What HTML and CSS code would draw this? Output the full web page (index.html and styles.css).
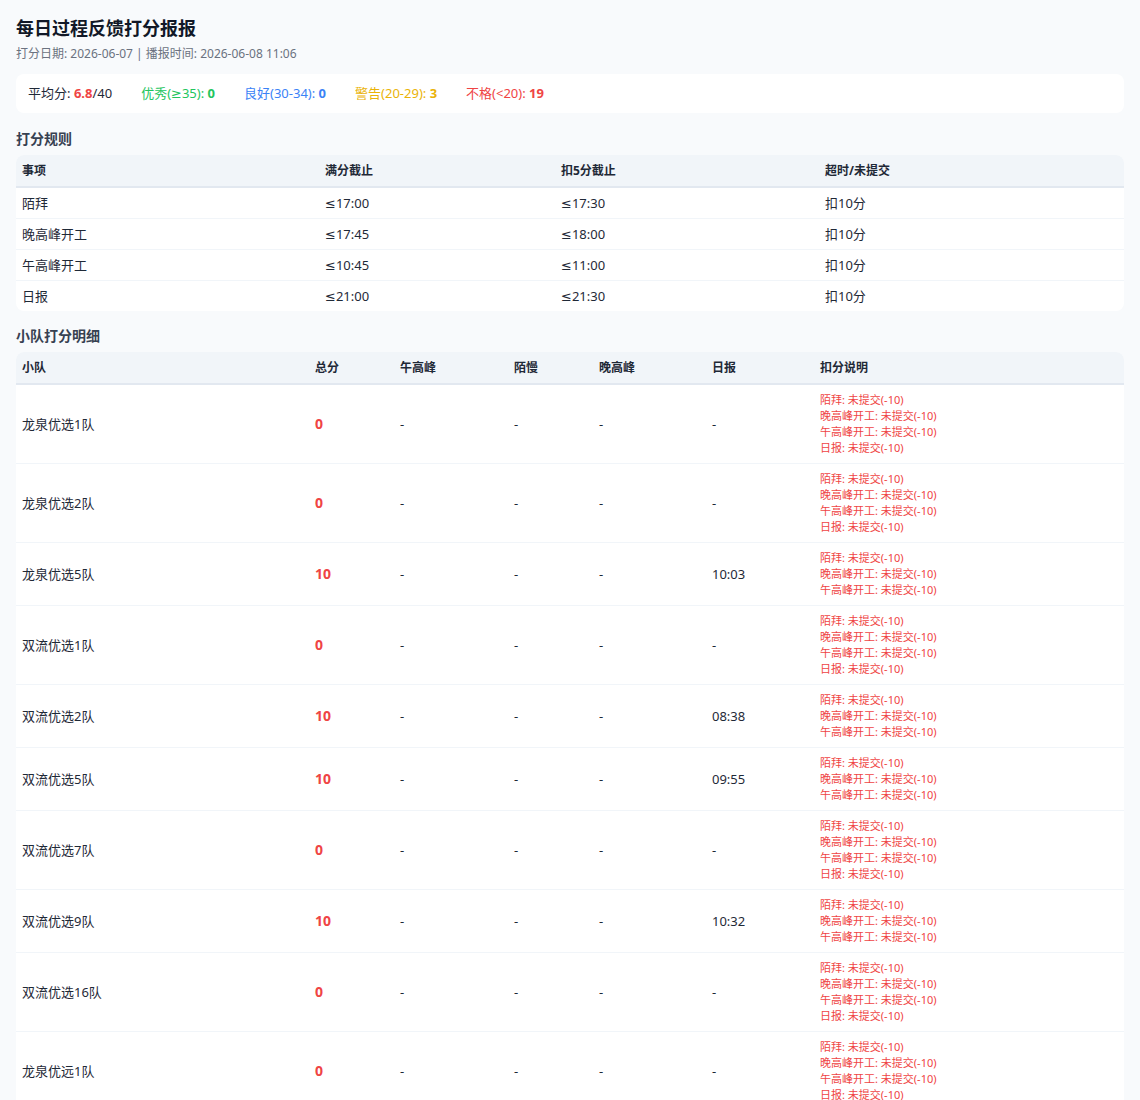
FILE: index.html
```html
<!DOCTYPE html>
<html lang="zh-CN">
<head>
<meta charset="utf-8">
<title>每日过程反馈打分报报</title>
<link rel="stylesheet" href="styles.css">
</head>
<body>
<div class="page">
  <h1 class="title">每日过程反馈打分报报</h1>
  <div class="sub">打分日期: 2026-06-07 | 播报时间: 2026-06-08 11:06</div>

  <div class="summary">
    <span class="sum-item">平均分: <b class="red">6.8</b>/40</span>
    <span class="sum-item green">优秀(≥35): <b>0</b></span>
    <span class="sum-item blue">良好(30-34): <b>0</b></span>
    <span class="sum-item amber">警告(20-29): <b>3</b></span>
    <span class="sum-item red">不格(&lt;20): <b>19</b></span>
  </div>

  <h2 class="section">打分规则</h2>
  <table class="tbl rules">
    <colgroup>
      <col class="r1"><col class="r2"><col class="r3"><col class="r4">
    </colgroup>
    <thead>
      <tr><th>事项</th><th>满分截止</th><th>扣5分截止</th><th>超时/未提交</th></tr>
    </thead>
    <tbody>
      <tr><td>陌拜</td><td>≤17:00</td><td>≤17:30</td><td>扣10分</td></tr>
      <tr><td>晚高峰开工</td><td>≤17:45</td><td>≤18:00</td><td>扣10分</td></tr>
      <tr><td>午高峰开工</td><td>≤10:45</td><td>≤11:00</td><td>扣10分</td></tr>
      <tr><td>日报</td><td>≤21:00</td><td>≤21:30</td><td>扣10分</td></tr>
    </tbody>
  </table>

  <h2 class="section second">小队打分明细</h2>
  <table class="tbl teams">
    <colgroup>
      <col class="t1"><col class="t2"><col class="t3"><col class="t4"><col class="t5"><col class="t6"><col class="t7">
    </colgroup>
    <thead>
      <tr><th>小队</th><th>总分</th><th>午高峰</th><th>陌慢</th><th>晚高峰</th><th>日报</th><th>扣分说明</th></tr>
    </thead>
    <tbody>
      <tr><td>龙泉优选1队</td><td class="score">0</td><td>-</td><td>-</td><td>-</td><td>-</td>
        <td class="ded"><div>陌拜: 未提交(-10)</div><div>晚高峰开工: 未提交(-10)</div><div>午高峰开工: 未提交(-10)</div><div>日报: 未提交(-10)</div></td></tr>
      <tr><td>龙泉优选2队</td><td class="score">0</td><td>-</td><td>-</td><td>-</td><td>-</td>
        <td class="ded"><div>陌拜: 未提交(-10)</div><div>晚高峰开工: 未提交(-10)</div><div>午高峰开工: 未提交(-10)</div><div>日报: 未提交(-10)</div></td></tr>
      <tr><td>龙泉优选5队</td><td class="score">10</td><td>-</td><td>-</td><td>-</td><td>10:03</td>
        <td class="ded"><div>陌拜: 未提交(-10)</div><div>晚高峰开工: 未提交(-10)</div><div>午高峰开工: 未提交(-10)</div></td></tr>
      <tr><td>双流优选1队</td><td class="score">0</td><td>-</td><td>-</td><td>-</td><td>-</td>
        <td class="ded"><div>陌拜: 未提交(-10)</div><div>晚高峰开工: 未提交(-10)</div><div>午高峰开工: 未提交(-10)</div><div>日报: 未提交(-10)</div></td></tr>
      <tr><td>双流优选2队</td><td class="score">10</td><td>-</td><td>-</td><td>-</td><td>08:38</td>
        <td class="ded"><div>陌拜: 未提交(-10)</div><div>晚高峰开工: 未提交(-10)</div><div>午高峰开工: 未提交(-10)</div></td></tr>
      <tr><td>双流优选5队</td><td class="score">10</td><td>-</td><td>-</td><td>-</td><td>09:55</td>
        <td class="ded"><div>陌拜: 未提交(-10)</div><div>晚高峰开工: 未提交(-10)</div><div>午高峰开工: 未提交(-10)</div></td></tr>
      <tr><td>双流优选7队</td><td class="score">0</td><td>-</td><td>-</td><td>-</td><td>-</td>
        <td class="ded"><div>陌拜: 未提交(-10)</div><div>晚高峰开工: 未提交(-10)</div><div>午高峰开工: 未提交(-10)</div><div>日报: 未提交(-10)</div></td></tr>
      <tr><td>双流优选9队</td><td class="score">10</td><td>-</td><td>-</td><td>-</td><td>10:32</td>
        <td class="ded"><div>陌拜: 未提交(-10)</div><div>晚高峰开工: 未提交(-10)</div><div>午高峰开工: 未提交(-10)</div></td></tr>
      <tr><td>双流优选16队</td><td class="score">0</td><td>-</td><td>-</td><td>-</td><td>-</td>
        <td class="ded"><div>陌拜: 未提交(-10)</div><div>晚高峰开工: 未提交(-10)</div><div>午高峰开工: 未提交(-10)</div><div>日报: 未提交(-10)</div></td></tr>
      <tr><td>龙泉优远1队</td><td class="score">0</td><td>-</td><td>-</td><td>-</td><td>-</td>
        <td class="ded"><div>陌拜: 未提交(-10)</div><div>晚高峰开工: 未提交(-10)</div><div>午高峰开工: 未提交(-10)</div><div>日报: 未提交(-10)</div></td></tr>
    </tbody>
  </table>
</div>
</body>
</html>
```

FILE: styles.css
```css
* { box-sizing: border-box; }
html, body { margin: 0; padding: 0; }
body {
  background: #f8fafc;
  font-family: "Noto Sans", "DejaVu Sans", "Noto Sans CJK SC", sans-serif;
  color: #1f2937;
}
.page { padding: 16px; }
.title {
  margin: 0;
  font-size: 18px;
  line-height: 24px;
  font-weight: 700;
  color: #111827;
}
.sub {
  margin-top: 6px;
  font-size: 12px;
  line-height: 16px;
  color: #6b7280;
}
.summary {
  margin-top: 12px;
  background: #ffffff;
  border-radius: 8px;
  padding: 11px 12px;
  display: flex;
  gap: 29px;
  font-size: 13px;
  line-height: 17px;
  color: #1f2937;
}
.summary b { font-weight: 700; }
.red { color: #ef4444; }
.green { color: #22c55e; }
.blue { color: #3b82f6; }
.amber { color: #eab308; }

.section {
  margin: 16px 0 6px;
  font-size: 14px;
  line-height: 20px;
  font-weight: 700;
  color: #374151;
}
.section.second { margin-top: 15px; }

.tbl {
  width: 100%;
  table-layout: fixed;
  border-collapse: separate;
  border-spacing: 0;
  background: #ffffff;
  border-radius: 8px;
  overflow: hidden;
  font-size: 13px;
  line-height: 16px;
}
.tbl th {
  background: #f1f5f9;
  text-align: left;
  font-size: 12px;
  font-weight: 700;
  color: #1f2937;
  padding: 8px 6px 7px;
  border-bottom: 2px solid #e2e8f0;
}
.tbl td {
  padding: 7px 6px;
  text-align: left;
  vertical-align: middle;
  border-bottom: 1px solid #f1f5f9;
  color: #1f2937;
}
.tbl tbody tr:last-child td { border-bottom: none; }

.r1 { width: 303px; }
.r2 { width: 236px; }
.r3 { width: 264px; }
.r4 { width: 305px; }

.t1 { width: 293px; }
.t2 { width: 85px; }
.t3 { width: 114px; }
.t4 { width: 85px; }
.t5 { width: 113px; }
.t6 { width: 108px; }
.t7 { width: 310px; }

.tbl td.score {
  color: #ef4444;
  font-weight: 700;
  font-size: 14px;
}
.tbl td.ded {
  color: #ef4444;
  font-size: 11px;
  line-height: 16px;
}
```
